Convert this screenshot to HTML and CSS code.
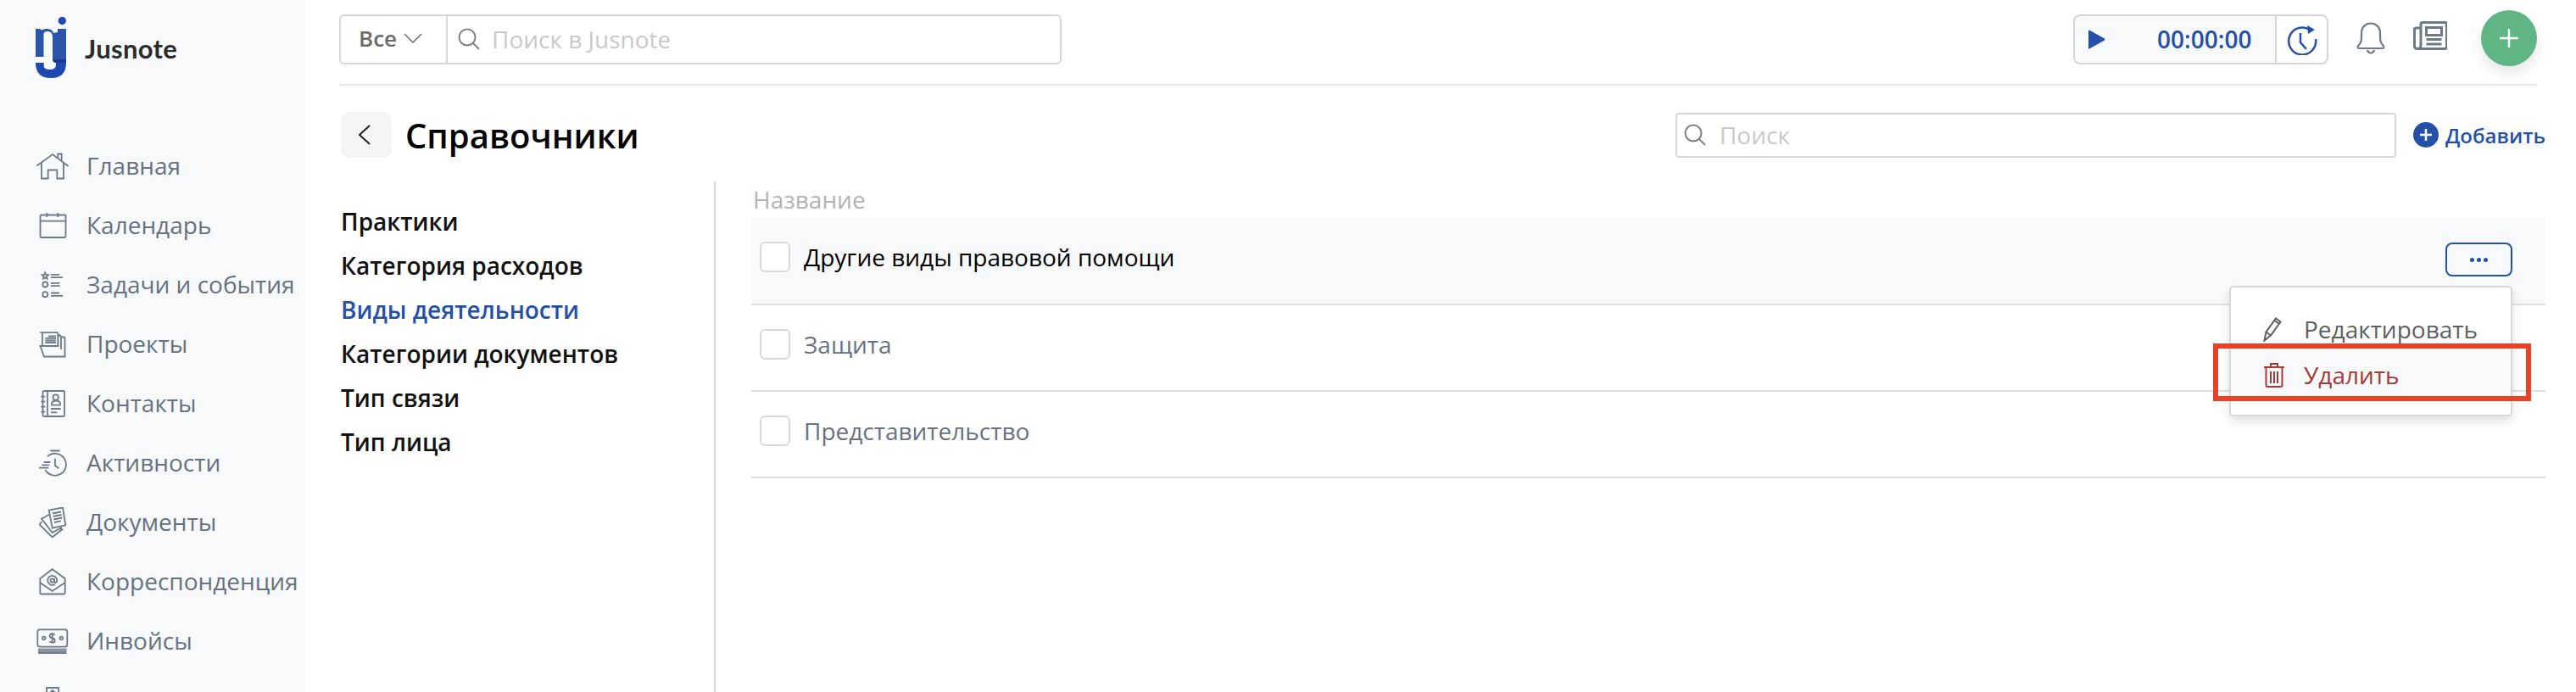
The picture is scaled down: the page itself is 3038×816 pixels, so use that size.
FILE: index.html
```html
<!DOCTYPE html>
<html lang="ru">
<head>
<meta charset="utf-8">
<title>Jusnote — Справочники</title>
<link rel="stylesheet" href="styles.css">
</head>
<body>
<div class="app">
  <aside class="sidebar">
    <div class="brand">
      <svg class="brand-mark" viewBox="0 0 38 74" width="38" height="74">
        <circle cx="31.300" cy="4.500" r="4.700" fill="#2149b0"/>
        <path d="M0 14H5L7 15.500Q10 13.500 14 14 20 14.500 21 19L26 18V14H36V50H20V24Q20 17 14 17 10 17 9.500 20V47H0Z" fill="#2a55a8"/>
        <path d="M0 54H9.700V58Q10 62 17 62 24 62 24 56V54H36V54Q36 72 18 72 0 72 0 54Z" fill="#1f47b0"/>
        <path d="M20 50H36V54H24Q20 54 20 50Z" fill="#183a96"/>
      </svg>
      <span class="brand-name">Jusnote</span>
    </div>
    <nav class="nav">
      <a class="nav-item"><svg class="nav-icon" viewBox="0 0 40 36"><path d="M1.500 17.500 20 4l18.500 14M7 14v18.500h7.700V22.500h10.600v10H33V14M26.300 8V3.500h4.400V12"/></svg><span>Главная</span></a>
      <a class="nav-item"><svg class="nav-icon" viewBox="0 0 40 36"><path d="M7 5.500h28a1.500 1.500 0 0 1 .5 1V30.500a1.500 1.500 0 0 1-1.500 1.500H7a1.500 1.500 0 0 1-1.500-1.500V7A1.500 1.500 0 0 1 7 5.500ZM5.500 12.700h30M13.300 3v5M26.300 3v5"/></svg><span>Календарь</span></a>
      <a class="nav-item"><svg class="nav-icon" viewBox="0 0 40 36"><path d="m11.300 3.500 1 2.500 2.700.2-2 1.800.6 2.700-2.300-1.400L9 10.700l.6-2.700-2-1.800 2.700-.2ZM18 5.800h10M18 9.200h14M18 15.800h10.500M18 19.200h10.500M18 27.500h10M18 30.800h14"/><circle cx="11.300" cy="17.500" r="3"/><circle cx="11.300" cy="29.200" r="3"/></svg><span>Задачи и события</span></a>
      <a class="nav-item"><svg class="nav-icon" viewBox="0 0 40 36"><path d="M5.300 4.200h21M8 4.200V20M26.300 4.200V20M11.300 10.800H24M11.300 13.500H24M11.300 16H24M15 8.500h9M5.500 20 10 32.500h24.500V11q0-1.500-1-1.500h-3l-2-2.500-2 1.500V20ZM30 9.500V24"/></svg><span>Проекты</span></a>
      <a class="nav-item"><svg class="nav-icon" viewBox="0 0 40 36"><path d="M10 3h22.500A1.500 1.500 0 0 1 34 4.500v27a1.500 1.500 0 0 1-1.500 1.500H10a1.500 1.500 0 0 1-1.500-1.500v-27A1.500 1.500 0 0 1 10 3ZM14 3v30M6.300 9.700h5M6.300 15.700h5M6.300 21.700h5M6.300 27.700h5M19 19.700v-1.500q0-3.500 5-3.500t5 3.500v1.500ZM18 24h11.700M18 28.300h7.300"/><circle cx="23.700" cy="10.500" r="3.200"/></svg><span>Контакты</span></a>
      <a class="nav-item"><svg class="nav-icon" viewBox="0 0 40 36"><path d="M17.300 3.500h11.400M14 10.300A13 13 0 1 1 11.500 26M23 12.700V21l4.300 3.300M9.700 17h7.600M7.300 20.300h9M4 23.700h11.300"/></svg><span>Активности</span></a>
      <a class="nav-item"><svg class="nav-icon" viewBox="0 0 40 36"><path d="M15.700 3.700 32 .5 35.300 21.300 19.700 24.700ZM20 7.500l10-2M20.700 11l10-2M21.300 14.500l10-2M22 18l8-1.600M15.700 9 7 13.700 19.700 30 31 24M7 17 4.700 20.700 19.700 35.500 31.300 26.300 28 24.500"/></svg><span>Документы</span></a>
      <a class="nav-item"><svg class="nav-icon" viewBox="0 0 40 36"><path d="M5.300 14.200 19.700 3.200l15 11V31q0 1.500-1.500 1.500H7q-1.700 0-1.700-1.500ZM5.300 19l14.400 10 15-10"/><circle cx="19.700" cy="16.500" r="2.200"/><path d="M22 14.300v3q0 1.700 1.500 1.700t1.700-2.500a5.500 5.500 0 1 0-2.500 4.500"/></svg><span>Корреспонденция</span></a>
      <a class="nav-item"><svg class="nav-icon" viewBox="0 0 40 36"><path d="M5 4.300h29.500a2.800 2.800 0 0 1 2.800 2.800V22a2.800 2.800 0 0 1-2.800 2.700H5A2.800 2.800 0 0 1 2.300 22V7.100A2.800 2.800 0 0 1 5 4.300ZM3 27.700h33.500M3 29.800h33.500M3 32h33.500M22.500 11q-1-1.800-3-1.800-2.800 0-2.800 2.500 0 2.300 3 2.800t3 2.900q0 2.400-3 2.400-2.200 0-3.200-1.800M19.700 8.500v12"/><circle cx="9.700" cy="14.500" r="1.800"/><circle cx="30.300" cy="14.500" r="1.800"/></svg><span>Инвойсы</span></a>
      <a class="nav-item"><svg class="nav-icon" viewBox="0 0 40 36"><path d="M13 3h14v28H13ZM20 13V6M17 9l3-3 3 3"/></svg><span>Отчеты</span></a>
    </nav>
  </aside>

  <main class="main">
    <header class="topbar">
      <div class="global-search">
        <div class="scope"><span>Все</span><svg class="chev" viewBox="0 0 22 12" width="22" height="12"><path d="m1 1 10 10L21 1"/></svg></div>
        <div class="search-field">
          <svg class="lens" viewBox="0 0 26 26" width="26" height="26"><circle cx="11" cy="11" r="9.500"/><path d="m18 18 7 7"/></svg>
          <span class="placeholder">Поиск в Jusnote</span>
        </div>
      </div>
      <div class="top-actions">
        <div class="timer">
          <div class="timer-main">
            <svg viewBox="0 0 21 23" width="21" height="23"><path d="M1 1.500Q1 0 2.500 .8L20 10.500q1 1 0 2L2.500 22.200Q1 23 1 21.500Z" fill="#2450a8"/></svg>
            <span class="time">00:00:00</span>
          </div>
          <div class="timer-history">
            <svg viewBox="0 0 36 36" width="36" height="36" class="hist"><path d="M26 5.500A16 16 0 1 0 34 17M16 10v11l7 8"/><path d="m24 1 9 5-8 5Z" fill="#2450a8" stroke="none"/></svg>
          </div>
        </div>
        <svg class="bell" viewBox="0 0 36 38" width="36" height="38"><path d="M4 27q3-3 3-9v-5C7 6 12 1.500 18 1.500S29 6 29 13v5q0 6 3 9 3 3 0 4H4q-3-1 0-4ZM14 33q1 3.500 4 3.500t4-3.500"/></svg>
        <svg class="news" viewBox="0 0 40 34" width="40" height="34"><path d="M9 8H3.500q-2 0-2 2v19q0 3.500 3.500 3.500h32.500q2 0 2-2V3.500q0-2-2-2H11q-2 0-2 2V29q0 3.500-4 3.500"/><path d="M15.500 7.500h18v9h-18ZM15.500 21.500h18M15.500 27h18"/></svg>
        <div class="fab"><svg viewBox="0 0 24 24" width="24" height="24"><path d="M12 1v22M1 12h22"/></svg></div>
      </div>
    </header>

    <section class="page-head">
      <div class="back"><svg viewBox="0 0 14 24" width="14" height="24"><path d="M13 1 1 12l12 11"/></svg></div>
      <h1 class="title">Справочники</h1>
      <div class="local-search">
        <svg class="lens" viewBox="0 0 26 26" width="26" height="26"><circle cx="11" cy="11" r="9.500"/><path d="m18 18 7 7"/></svg>
        <span class="placeholder">Поиск</span>
      </div>
      <a class="add"><span class="add-dot"><svg viewBox="0 0 16 16" width="16" height="16"><path d="M8 1v14M1 8h14"/></svg></span>Добавить</a>
    </section>

    <section class="body">
      <ul class="dict-list">
        <li>Практики</li>
        <li>Категория расходов</li>
        <li class="active">Виды деятельности</li>
        <li>Категории документов</li>
        <li>Тип связи</li>
        <li>Тип лица</li>
      </ul>
      <div class="table">
        <div class="table-head">Название</div>
        <div class="row hover">
          <span class="check"></span><span class="row-text">Другие виды правовой помощи</span>
          <button class="more"><i></i><i></i><i></i></button>
          <div class="menu">
            <div class="menu-item edit"><svg viewBox="0 0 26 30" width="26" height="30"><path d="m1.500 28.500 2-10L15 2.500l5.500 4L9 22.500ZM3.500 18.500l5.500 4M13.500 5l5.500 4"/></svg><span>Редактировать</span></div>
            <div class="menu-item danger"><svg viewBox="0 0 26 30" width="26" height="30"><path d="M1 6h24M9 6V2h8v4M3.500 6v21q0 2 2 2h15q2 0 2-2V6M9 11v14M13 11v14M17 11v14"/></svg><span>Удалить</span></div>
            <div class="callout"></div>
          </div>
        </div>
        <div class="row"><span class="check"></span><span class="row-text">Защита</span></div>
        <div class="row"><span class="check"></span><span class="row-text">Представительство</span></div>
      </div>
    </section>
  </main>
</div>
</body>
</html>
```
FILE: styles.css
```css
* { box-sizing: border-box; }
html, body { margin: 0; height: 100%; overflow: hidden; background: #fff; }
body { font-family: "Open Sans", "Liberation Sans", sans-serif; color: #000; }
.app { display: flex; width: 3038px; height: 816px; overflow: hidden; }

.sidebar { flex: 0 0 360px; background: #f8f9fb; height: 816px; overflow: hidden; padding: 20px 0 0 42px; }
.brand { display: flex; align-items: center; gap: 20px; height: 74px; }
.brand-name { font-family: "Lato", sans-serif; font-weight: 700; font-size: 31px; letter-spacing: .3px; color: #2b2b2b; }
.nav { margin-top: 67px; display: flex; flex-direction: column; }
.nav-item { display: flex; align-items: center; height: 70px; flex: none; color: #66727f; font-size: 28px; white-space: nowrap; }
.nav-item span { padding-bottom: 3px; }
.nav-icon { flex: 0 0 40px; width: 40px; height: 36px; margin-right: 20px; fill: none; stroke: #6e7a88; stroke-width: 1.800; }

.main { flex: 1; min-width: 0; padding: 0 36px 0 40px; display: flex; flex-direction: column; }
.topbar { flex: 0 0 101px; display: flex; align-items: flex-start; justify-content: space-between; border-bottom: 2px solid #e6e7ea; margin-right: 10px; padding-top: 17px; }
.global-search { width: 852px; height: 59px; display: flex; border: 2px solid #d6d6d6; border-radius: 6px; }
.scope { width: 126px; display: flex; align-items: center; gap: 8px; padding: 0 0 3px 21px; font-size: 26px; font-weight: 600; color: #6b6b6b; border-right: 2px solid #d6d6d6; }
.chev { fill: none; stroke: #6b6b6b; stroke-width: 1.500; flex: none; }
.search-field { display: flex; align-items: center; gap: 14px; padding: 0 0 2px 12px; }
.lens { fill: none; stroke: #808080; stroke-width: 2; flex: none; }
.placeholder { font-size: 28px; color: #c9c9c9; }

.top-actions { display: flex; align-items: flex-start; }
.timer { width: 301px; height: 59px; display: flex; border: 2px solid #d6d6d6; border-radius: 8px; background: #f8f9fb; }
.timer-main { flex: 1; display: flex; align-items: center; padding-left: 15px; border-right: 2px solid #d6d6d6; }
.time { margin-left: 61px; padding-bottom: 2px; font-size: 28px; font-weight: 600; color: #2450a8; }
.timer-history { width: 59px; background: #fff; display: flex; align-items: center; justify-content: center; border-radius: 0 8px 8px 0; }
.hist { fill: none; stroke: #2450a8; stroke-width: 2.500; }
.bell { margin: 9px 0 0 32px; fill: none; stroke: #6e7a88; stroke-width: 2.200; flex: none; }
.news { margin: 8px 0 0 32px; fill: none; stroke: #6e7a88; stroke-width: 3; flex: none; }
.fab { width: 66px; height: 66px; margin: -5px 0 0 40px; border-radius: 50%; background: #5fb583; box-shadow: 0 8px 16px rgba(0, 0, 0, .1); display: flex; align-items: center; justify-content: center; flex: none; }
.fab svg { fill: none; stroke: #fff; stroke-width: 2.500; }

.page-head { flex: 0 0 113px; display: flex; align-items: center; padding-top: 3px; }
.back { width: 60px; height: 54px; margin-left: 2px; background: #f5f5f5; border-radius: 10px; display: flex; align-items: center; justify-content: center; }
.back svg { fill: none; stroke: #222; stroke-width: 2; margin-right: 4px; }
.title { margin: 0 0 0 16px; font-size: 40px; font-weight: 600; color: #000; flex: 1; }
.local-search { width: 850px; height: 53px; display: flex; align-items: center; gap: 16px; padding: 0 0 0 8px; border: 2px solid #d6d6d6; border-radius: 4px; }
.add { display: flex; align-items: center; gap: 8px; margin-left: 20px; font-size: 24px; font-weight: 600; color: #2450a8; white-space: nowrap; }
.add-dot { width: 30px; height: 30px; border-radius: 50%; background: #2450a8; display: flex; align-items: center; justify-content: center; }
.add-dot svg { fill: none; stroke: #fff; stroke-width: 2.500; }

.body { flex: 1; display: flex; min-height: 0; }
.dict-list { list-style: none; margin: 0; padding: 21px 0 0 2px; width: 444px; border-right: 2px solid #d8d8d8; flex: none; }
.dict-list li { height: 52px; line-height: 52px; font-size: 28px; font-weight: 600; color: #111; }
.dict-list li.active { color: #2450a8; }
.table { flex: 1; margin-left: 42px; min-width: 0; }
.table-head { height: 42px; line-height: 42px; padding-left: 2px; font-size: 28px; color: #b3b3b3; }
.row { position: relative; height: 102px; display: flex; align-items: center; padding: 0 0 9px 10px; border-bottom: 2px solid #dedfe1; }
.row.hover { height: 104px; padding-bottom: 8px; background: #f8f9fb; }
.row.hover .row-text { color: #000; }
.check { width: 36px; height: 36px; background: #fff; border: 2px solid #d9d9d9; border-radius: 6px; flex: none; }
.row-text { margin-left: 16px; font-size: 28px; color: #66727f; }
.more { position: absolute; right: 39px; top: 30px; width: 79px; height: 40px; padding: 0; display: flex; align-items: center; justify-content: center; gap: 3px; background: transparent; border: 2px solid #2450a8; border-radius: 8px; }
.more i { width: 5px; height: 5px; border-radius: 50%; background: #2450a8; }
.menu { position: absolute; right: 39px; top: 81px; width: 334px; height: 154px; padding-top: 29px; background: #fff; border: 2px solid #d8d8d8; border-radius: 5px; box-shadow: 0 6px 12px rgba(0, 0, 0, .12); z-index: 2; }
.menu-item { display: flex; align-items: center; padding-left: 38px; gap: 22px; font-size: 28px; color: #5f5f5f; }
.menu-item.edit { height: 44px; padding-bottom: 4px; }
.menu-item svg { fill: none; stroke: #5f5f5f; stroke-width: 2; flex: none; }
.menu-item.danger { height: 55px; padding-top: 5px; background: #f8f9fb; color: #a33a35; }
.menu-item.danger svg { stroke: #a33a35; }
.callout { position: absolute; left: -21px; top: 66px; width: 375px; height: 68px; border: 6px solid #ee4123; }
```
